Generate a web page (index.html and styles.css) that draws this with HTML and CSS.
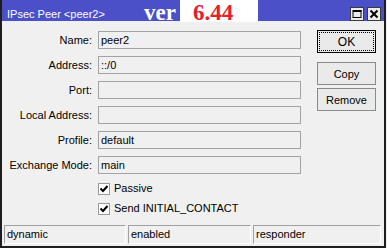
FILE: index.html
```html
<!DOCTYPE html>
<html lang="en">
<head>
  <meta charset="UTF-8">
  <title>IPsec Peer &lt;peer2&gt;</title>
  <link rel="stylesheet" href="styles.css">
</head>
<body>

  <div class="window">
    <div class="titlebar">
      <span class="title">IPsec Peer &lt;peer2&gt;</span>
      <div class="watermark">
        <span class="ver">ver</span>
        <span class="ver-num">6.44</span>
      </div>
      <div class="title-btns">
        <span class="tbtn">
          <svg width="12" height="12" viewBox="0 0 12 12">
            <rect x="2" y="2.5" width="8" height="7" fill="none" stroke="#000" stroke-width="1"/>
            <rect x="2" y="2" width="8.5" height="2" fill="#000"/>
          </svg>
        </span>
        <span class="tbtn">
          <svg width="12" height="12" viewBox="0 0 12 12">
            <path d="M2.5 2.5 L9.5 9.5 M9.5 2.5 L2.5 9.5" stroke="#000" stroke-width="2"/>
          </svg>
        </span>
      </div>
    </div>

    <div class="content">
      <form class="fields">
        <label>Name:</label>
        <div class="input">peer2</div>
        <label>Address:</label>
        <div class="input">::/0</div>
        <label>Port:</label>
        <div class="input"></div>
        <label>Local Address:</label>
        <div class="input"></div>
        <label>Profile:</label>
        <div class="input">default</div>
        <label>Exchange Mode:</label>
        <div class="input">main</div>

        <div class="check-row first">
          <span class="check">
            <svg width="10" height="10" viewBox="0 0 10 10"><path d="M1.5 4.5 L4 7 L8.5 2" fill="none" stroke="#000" stroke-width="2"/></svg>
          </span>
          Passive
        </div>
        <div class="check-row">
          <span class="check">
            <svg width="10" height="10" viewBox="0 0 10 10"><path d="M1.5 4.5 L4 7 L8.5 2" fill="none" stroke="#000" stroke-width="2"/></svg>
          </span>
          Send INITIAL_CONTACT
        </div>
      </form>

      <div class="actions">
        <button class="btn btn-ok" type="button">OK</button>
        <button class="btn btn-copy" type="button">Copy</button>
        <button class="btn" type="button">Remove</button>
      </div>
    </div>

    <div class="statusbar">
      <div class="status">dynamic</div>
      <div class="status">enabled</div>
      <div class="status">responder</div>
    </div>
  </div>

</body>
</html>
```

FILE: styles.css
```css
body {
  margin: 0;
  background-color: #f0f0f0;
  font-family: 'Liberation Sans', Arial, sans-serif;
  font-size: 11px;
  color: #000;
}

.window {
  width: 386px;
  height: 248px;
  box-sizing: border-box;
  border-left: 2px solid #1e1e1e;
  border-right: 2px solid #1e1e1e;
  border-bottom: 2px solid #1e1e1e;
  background: #f0f0f0;
  display: flex;
  flex-direction: column;
}

.titlebar {
  position: relative;
  height: 21px;
  background-color: #4b50c8;
  display: flex;
}

.title {
  color: #fff;
  padding: 8px 0 0 5px;
  line-height: 13px;
}

/* version tag pasted over the title bar */
.watermark {
  position: absolute;
  left: 142px;
  top: 0;
  height: 22px;
  display: flex;
  align-items: flex-start;
  font-family: 'Liberation Serif', 'Times New Roman', serif;
  font-weight: bold;
  font-size: 23px;
  line-height: 26px;
}

.ver {
  color: #fff;
  width: 36px;
}

.ver-num {
  background: linear-gradient(#fff, #fff) no-repeat 0 0 / 100% 22px;
  color: #e4202a;
  width: 65px;
  padding-left: 13px;
}

.title-btns {
  margin-left: auto;
  margin-right: 3px;
  padding-top: 7px;
  display: flex;
  gap: 3px;
}

.tbtn {
  width: 12px;
  height: 12px;
  border: 1px solid #3a3a3a;
  background: #ececec;
  display: flex;
}

.content {
  display: flex;
  padding: 9px 8px 0 0;
}

.fields {
  width: 299px;
  margin: 1px 0 0 0;
  display: grid;
  grid-template-columns: 90px 203px;
  grid-auto-rows: 18px;
  column-gap: 6px;
  row-gap: 7px;
}

.fields label {
  text-align: right;
  line-height: 18px;
}

.input {
  border: 1px solid #a3a3a3;
  line-height: 16px;
  padding-left: 2px;
}

.check-row {
  grid-column: 2;
  height: 13px;
  display: flex;
  align-items: center;
  gap: 4px;
  line-height: 13px;
}

.check-row.first {
  margin-top: 1px;
}

.check-row + .check-row {
  margin-top: -4px;
}

.check {
  width: 10px;
  height: 10px;
  border: 1px solid #9a9a9a;
  background: #fff;
  display: flex;
}

.actions {
  margin-left: 16px;
  width: 59px;
  display: flex;
  flex-direction: column;
}

.btn {
  height: 23px;
  padding: 0;
  border: 1px solid #8a8a8a;
  background: #eaeaea;
  font-family: inherit;
  font-size: 11px;
  color: #000;
}

.btn-ok {
  border-color: #000;
  outline: 1px dotted #000;
  outline-offset: -3px;
  font-size: 12px;
}

.btn-copy {
  margin-top: 9px;
  margin-bottom: 3px;
}

.statusbar {
  margin-top: auto;
  padding: 0 0 2px 2px;
  display: grid;
  grid-template-columns: 122px 123px 128px;
  column-gap: 2px;
}

.status {
  height: 19px;
  box-sizing: border-box;
  border-top: 1px solid #a0a0a0;
  border-left: 1px solid #a0a0a0;
  border-right: 1px solid #fff;
  border-bottom: 1px solid #fff;
  line-height: 17px;
  padding-left: 2px;
}
```
